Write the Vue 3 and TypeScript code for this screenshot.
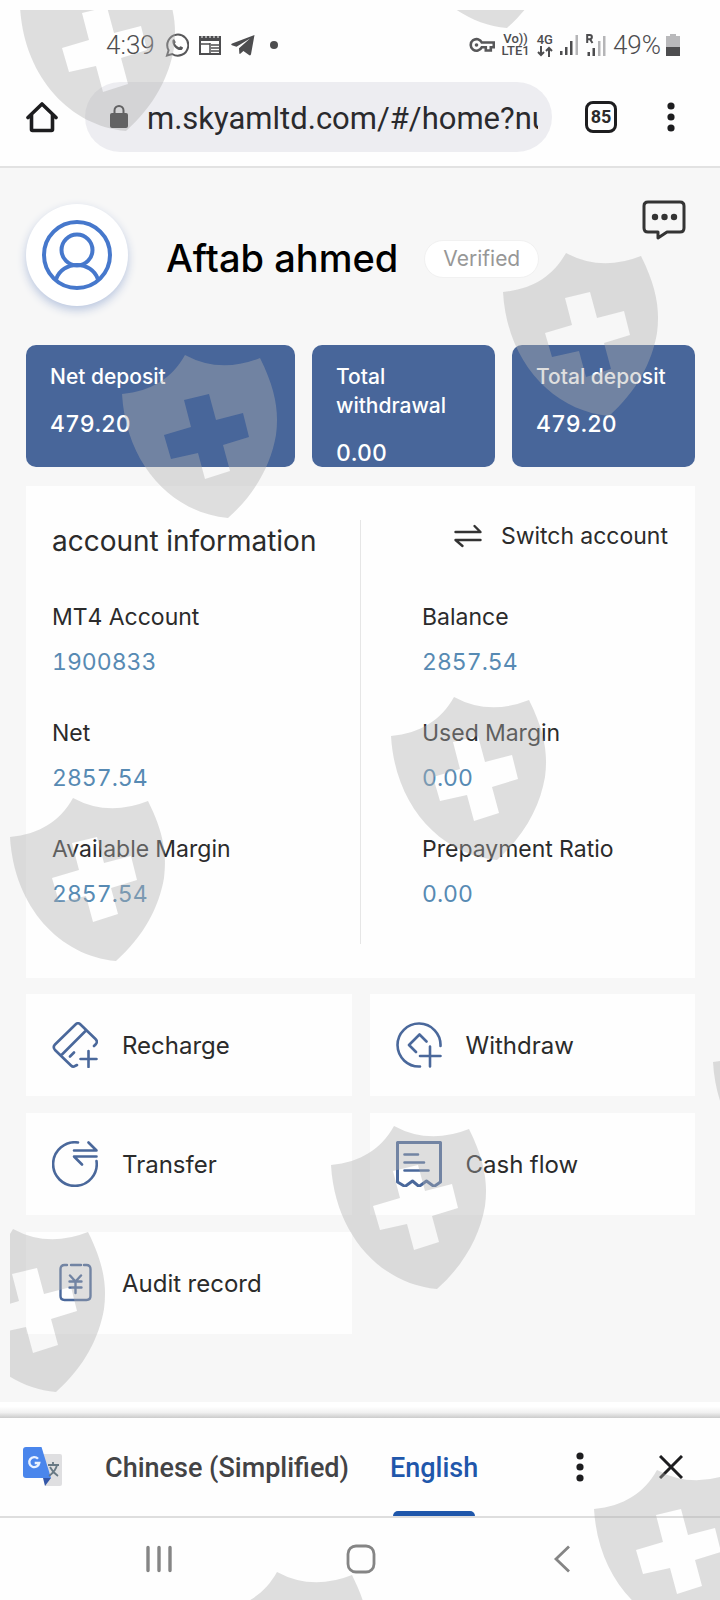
<script setup lang="ts">
import { ref } from 'vue'

interface Item { label: string; value: string }

const address = ref('m.skyamltd.com/#/home?nu')
const language = ref('English')

const totals: Item[] = [
  { label: 'Net deposit', value: '479.20' },
  { label: 'Total withdrawal', value: '0.00' },
  { label: 'Total deposit', value: '479.20' },
]
const leftDetails: Item[] = [
  { label: 'MT4 Account', value: '1900833' },
  { label: 'Net', value: '2857.54' },
  { label: 'Available Margin', value: '2857.54' },
]
const rightDetails: Item[] = [
  { label: 'Balance', value: '2857.54' },
  { label: 'Used Margin', value: '0.00' },
  { label: 'Prepayment Ratio', value: '0.00' },
]
const actions = [
  { id: 'recharge', label: 'Recharge' },
  { id: 'withdraw', label: 'Withdraw' },
  { id: 'transfer', label: 'Transfer' },
  { id: 'cash', label: 'Cash flow' },
  { id: 'audit', label: 'Audit record' },
]

// Left corner of every shield, relative to the watermark layer
const shields: [number, number][] = [
  [10, -3], [391, -106], [493, 282], [112, 384], [381, 726], [0, 827],
  [321, 1155], [-60, 1258], [703, 1052], [584, 1499], [204, 1601],
]
</script>

<template>
  <div class="phone">
    <header class="status">
      <div class="status-side">
        <span class="clock">4:39</span>
        <svg width="24" height="26" viewBox="0 0 24 26" fill="none" stroke="#58585a" stroke-width="2">
          <path d="M2 23.500l1.600-5.300A10.500 10.500 0 1 1 7.200 22z" />
          <path d="M7.500 8.200c.5-1.200 1.800-1.200 2.200-.3l.9 2c.2.600-.8 1.300-.7 1.700 1 2 2.300 3 4 3.700.6.100 1.200-1.300 1.800-1l2 1c.8.500-.1 2.200-1.100 2.600-4 1.400-10.200-4.500-9.100-9.700z" fill="#58585a" stroke="none" />
        </svg>
        <svg width="22" height="20" viewBox="0 0 22 20" fill="none" stroke="#4d4d4f" stroke-width="2">
          <path d="M1 3v16h20V3z" />
          <path d="M0 3.500h22" stroke-width="5" />
          <path d="M3 0v3M7 0v3M11 0v3M15 0v3M19 0v3" stroke="#fff" stroke-width="1" />
          <path d="M1 9h10M11 8v10M12 10h9M12 13h9M12 16h9" stroke-width="1.500" />
        </svg>
        <svg width="24" height="22" viewBox="0 0 24 22" fill="#4d4d4f">
          <path d="M23.500 1L20 20.300c-.3 1.200-1 1.400-2 .8l-5.600-4.200-2.800 2.700c-.7.600-1.200.4-1.300-.5L8 14.300 19 4.500 5.500 12.700.9 11.200c-1-.4-1-1 .2-1.600z" />
        </svg>
        <span class="dot"></span>
      </div>
      <div class="status-side right">
        <svg width="26" height="16" viewBox="0 0 26 16" fill="none" stroke="#58585a" stroke-width="2.600">
          <path d="M12.800 5.500a5.800 5.800 0 1 0 0 4.800h4v3.200h5v-3.200h3v-4.800z" />
          <circle cx="7.500" cy="8" r="1.800" fill="#58585a" stroke="none" />
        </svg>
        <span class="net">Vo))<br>LTE1</span>
        <span class="net band">4G
          <svg width="16" height="11" viewBox="0 0 16 11" fill="none" stroke="#4d4d4f" stroke-width="2">
            <path d="M4 0v9M1 6l3 3 3-3M12 11V2M9 5l3-3 3 3" />
          </svg>
        </span>
        <svg width="19" height="20" viewBox="0 0 19 20">
          <path d="M0 16h2.500v4H0zM5 12h2.500v8H5zM10 6h2.500v14H10z" fill="#4d4d4f" />
          <path d="M15.500 0H18v20h-2.500z" fill="#b5b5b7" />
        </svg>
        <svg width="20" height="22" viewBox="0 0 20 22">
          <path d="M1.500 18H4v4H1.500zM6.500 14H9v8H6.500z" fill="#4d4d4f" />
          <path d="M12 7h2.500v15H12zM17 2h2.500v20H17z" fill="#b5b5b7" />
          <path d="M1.200 9V1h2.600a2 2 0 0 1 0 4.200H1.500M4 5.200L6.500 9" fill="none" stroke="#4d4d4f" stroke-width="2" />
        </svg>
        <span class="clock">49%</span>
        <svg width="14" height="22" viewBox="0 0 14 22">
          <path d="M4 0h6v2h4v11H0V2h4z" fill="#b9b9bb" /><path d="M0 13h14v9H0z" fill="#4d4d4f" />
        </svg>
      </div>
    </header>

    <div class="browser">
      <button class="plain" aria-label="Home page">
        <svg width="32" height="32" viewBox="0 0 32 32" fill="none" stroke="#1d1d1f" stroke-width="3.600" stroke-linejoin="round" stroke-linecap="round">
          <path d="M2 16.500L16 3l14 13.500M5.500 14v14.500q0 1 1 1h19q1 0 1-1V14" />
        </svg>
      </button>
      <label class="address">
        <svg width="18" height="24" viewBox="0 0 18 24" fill="#2f2f31">
          <rect y="8" width="18" height="15" rx="2" />
          <path d="M4.500 9V5.500a4.500 4.500 0 0 1 9 0V9" fill="none" stroke="#2f2f31" stroke-width="2" />
        </svg>
        <input v-model="address" type="text" aria-label="Address">
      </label>
      <button class="tabs" aria-label="Open tabs">85</button>
      <button class="plain" aria-label="Browser menu">
        <svg width="8" height="30" viewBox="0 0 8 30" fill="#1d1d1f"><circle cx="4" cy="4" r="3.600" /><circle cx="4" cy="15" r="3.600" /><circle cx="4" cy="26" r="3.600" /></svg>
      </button>
    </div>

    <main>
      <section class="profile">
        <div class="avatar">
          <svg width="72" height="72" viewBox="0 0 72 72" fill="none" stroke="#4678cc" stroke-width="4">
            <circle cx="36" cy="36" r="33" /><circle cx="36" cy="31" r="15.500" />
            <path d="M15 60.500C18 51 27 46 36 46s18 5 21 14.500" />
          </svg>
        </div>
        <h1>Aftab ahmed</h1>
        <span class="verified">Verified</span>
        <button class="plain message" aria-label="Messages">
          <svg width="44" height="40" viewBox="0 0 44 40" fill="none" stroke="#343434" stroke-width="3" stroke-linejoin="round">
            <path d="M6 2h32q4 0 4 4v22q0 4-4 4H25l-9 6v-6H6q-4 0-4-4V6q0-4 4-4z" />
            <g fill="#343434" stroke="none"><circle cx="13" cy="17" r="3.200" /><circle cx="22.500" cy="17" r="3.200" /><circle cx="32" cy="17" r="3.200" /></g>
          </svg>
        </button>
      </section>

      <section class="totals">
        <div v-for="t in totals" :key="t.label" class="total">
          <div class="total-label">{{ t.label }}</div>
          <div class="total-value">{{ t.value }}</div>
        </div>
      </section>

      <section class="account">
        <div class="column">
          <h2>account information</h2>
          <dl>
            <div v-for="d in leftDetails" :key="d.label"><dt>{{ d.label }}</dt><dd>{{ d.value }}</dd></div>
          </dl>
        </div>
        <div class="column second">
          <button class="switch">
            <svg width="28" height="24" viewBox="0 0 28 24" fill="none" stroke="#333" stroke-width="2.400" stroke-linecap="round" stroke-linejoin="round">
              <path d="M1.500 8h25l-6-6M26.500 16h-25l7 6" />
            </svg>
            Switch account
          </button>
          <dl>
            <div v-for="d in rightDetails" :key="d.label"><dt>{{ d.label }}</dt><dd>{{ d.value }}</dd></div>
          </dl>
        </div>
      </section>

      <nav class="actions">
        <button v-for="a in actions" :key="a.id" class="action">
          <svg width="46" height="46" viewBox="0 0 46 46" fill="none" stroke="#4a689b" stroke-width="2.600" stroke-linecap="round" stroke-linejoin="round">
            <template v-if="a.id === 'recharge'">
              <path d="M25 43l-2 1q-2 1.500-4-.5L3 28q-2.500-3 0-5.500L23.500 2.500q2.500-2.500 5 0L43.500 17q2.500 2.500.5 5l-2 2M9 33.500L33.500 9M18 34.500l4-4M36.500 29v16M28.500 37h16" />
            </template>
            <template v-else-if="a.id === 'withdraw'">
              <path d="M44.500 24A21.500 21.500 0 1 0 24 44.500M20 30l-7-7L23.500 12.500l7 7M34 24.500v20M24 34h20.500" />
            </template>
            <template v-else-if="a.id === 'transfer'">
              <path d="M26 1.500A21.800 21.800 0 1 0 44.500 20M22 9.500h22.500l-8-8M44.500 15.500H22l8 8" />
            </template>
            <template v-else-if="a.id === 'cash'">
              <path d="M1.500 1.500h43V41L38 45.500 30.500 40 23 45.500 16.500 40 9 45.500 1.500 41z" stroke-width="3" />
              <path d="M8.500 13.500H22M8.500 21.500h19.500M8.500 29.500h24" />
            </template>
            <template v-else>
              <path d="M15 5h-2.500Q8.500 5 8.500 9v27q0 4 4 4h22q4 0 4-4V9q0-4-4-4H32M19 5h10M18 15.500l5.500 6 5.500-6M17.500 21.500h12M17.500 27.500h12M23.500 21.500V33" stroke-width="2.400" />
            </template>
          </svg>
          {{ a.label }}
        </button>
      </nav>
    </main>

    <div class="edge"></div>
    <section class="translate">
      <svg class="logo" width="40" height="40" viewBox="0 0 40 40">
        <path d="M20 7h17q2 0 2 2v28q0 2-2 2H22z" fill="#dfdfe1" />
        <path d="M20 31h8l-6 8z" fill="#3457a8" />
        <path d="M3 0h15.500L28 31H3q-3 0-3-3V3q0-3 3-3z" fill="#4a86ec" />
        <path d="M15 11.800a5 5 0 1 0 1.200 4.200h-4.500" fill="none" stroke="#e9f2ff" stroke-width="2.400" />
        <path d="M25 18h11M30 15v3M34 18c-1 5-4 8-8 11M27 20c2 4 5 7 8 9" fill="none" stroke="#687984" stroke-width="1.800" />
      </svg>
      <button class="lang" :class="{ active: language === 'Chinese' }" @click="language = 'Chinese'">Chinese (Simplified)</button>
      <button class="lang" :class="{ active: language === 'English' }" @click="language = 'English'">English</button>
      <div class="translate-tools">
        <button class="plain" aria-label="Translation options">
          <svg width="8" height="30" viewBox="0 0 8 30" fill="#1d1d1f"><circle cx="4" cy="4" r="3.600" /><circle cx="4" cy="15" r="3.600" /><circle cx="4" cy="26" r="3.600" /></svg>
        </button>
        <button class="plain" aria-label="Close">
          <svg width="24" height="24" viewBox="0 0 24 24" fill="none" stroke="#1d1d1f" stroke-width="3"><path d="M1 1l22 22M23 1L1 23" /></svg>
        </button>
      </div>
    </section>

    <nav class="system">
      <button class="plain" aria-label="Recent apps">
        <svg width="28" height="28" viewBox="0 0 28 28" stroke="#858585" stroke-width="3.400" stroke-linecap="round"><path d="M3 2.500v23M14 2.500v23M25 2.500v23" /></svg>
      </button>
      <button class="plain" aria-label="Home">
        <svg width="30" height="30" viewBox="0 0 30 30" fill="none" stroke="#858585" stroke-width="2.800"><rect x="2" y="2" width="26" height="26" rx="8" /></svg>
      </button>
      <button class="plain" aria-label="Back">
        <svg width="28" height="28" viewBox="0 0 28 28" fill="none" stroke="#858585" stroke-width="2.800"><path d="M21 1.500L8 14l13 12.500" /></svg>
      </button>
    </nav>

    <svg class="watermark" aria-hidden="true">
      <path
        v-for="([x, y], i) in shields"
        :key="i"
        :transform="`translate(${x} ${y})`"
        fill-rule="evenodd"
        d="M0 0C30-3 50-16 63-39Q98-20 138-36C154-4 157 18 154 41C149 70 134 99 106 124C50 119 4 70 0 0ZM62 6L87 0L94 26L121 19L127 43L101 51L108 77L83 85L76 59L49 65L42 41L69 33Z"
      />
    </svg>
  </div>
</template>

<style>
body { margin: 0; }
</style>

<style scoped>
* { box-sizing: border-box; }
.phone { position: relative; display: flex; flex-direction: column; min-height: 100vh; overflow: hidden; background: #fefefe; color: #2b2b2b; font-family: Inter, "Liberation Sans", sans-serif; font-variant-numeric: tabular-nums; }
button { border: 0; padding: 0; background: none; color: inherit; font: inherit; cursor: pointer; }
svg { display: block; flex: none; }
.plain { display: flex; }

.status { display: flex; justify-content: space-between; padding: 29px 40px 22px 106px; font-family: Roboto, sans-serif; color: #4d4d4f; }
.status-side { display: flex; align-items: center; gap: 10px; height: 32px; }
.status-side.right { gap: 7px; }
.clock { font-size: 26px; line-height: 32px; font-weight: 300; }
.right .clock { margin-right: -2px; }
.dot { width: 8px; height: 8px; margin-left: 5px; border-radius: 50%; background: #4d4d4f; }
.net { font-size: 13px; line-height: 12px; font-weight: 500; text-align: center; }
.band { display: flex; flex-direction: column; align-items: center; }

.browser { display: flex; align-items: center; height: 85px; padding: 0 45px 15px 26px; border-bottom: 2px solid #e2e2e2; font-family: Roboto, sans-serif; }
.address { display: flex; flex: 1; align-items: center; gap: 19px; min-width: 0; height: 70px; margin: 0 33px 0 27px; padding: 0 14px 0 25px; border-radius: 35px; background: #ededf1; }
.address input { flex: 1; min-width: 0; height: 46px; border: 0; padding: 2px 0 0; outline: 0; background: none; color: #2a2a2d; font: 31px/44px Roboto, sans-serif; }
.tabs { width: 32px; height: 32px; margin-right: 50px; border: 3px solid #1d1d1f; border-radius: 8px; font-size: 18px; line-height: 26px; font-weight: 700; }

main { flex: 1; padding: 36px 25px 66px 26px; background: #f7f7f7; }
.profile { display: flex; align-items: center; height: 102px; margin-bottom: 39px; }
.avatar { display: flex; align-items: center; justify-content: center; width: 102px; height: 102px; border-radius: 50%; background: #fff; box-shadow: 0 4px 10px #b9c6df; }
h1 { margin: 6px 26px 0 38px; font-size: 38px; line-height: 48px; font-weight: 500; color: #000; }
.verified { margin-top: 8px; padding: 0 18px; border: 1px solid #f1f1f1; border-radius: 19px; background: #fff; color: #979797; font-size: 21px; line-height: 36px; }
.message { align-self: flex-start; margin: -4px 9px 0 auto; }

.totals { display: grid; grid-template-columns: 269fr 183fr 183fr; gap: 17px; margin-bottom: 19px; }
.total { padding: 17px 24px 0; border-radius: 10px; background: #48669a; color: #fff; font-weight: 500; line-height: 29px; }
.total-label { margin-bottom: 19px; font-size: 21px; }
.total-value { font-size: 23px; line-height: 28px; }

.account { display: grid; grid-template-columns: 1fr 1fr; margin-bottom: 16px; padding: 34px 27px 34px 26px; background: #fefefe; }
.column { min-height: 424px; }
.second { padding-left: 61px; border-left: 1px solid #e6e6e6; }
h2 { height: 82px; margin: 0; font-size: 28px; line-height: 42px; font-weight: 400; }
.switch { display: flex; align-items: center; justify-content: flex-end; gap: 19px; width: 100%; height: 32px; margin-bottom: 50px; font-size: 23px; white-space: nowrap; }
dl { display: grid; gap: 41px; margin: 0; line-height: 30px; }
dt { margin-bottom: 15px; font-size: 23px; }
dd { margin: 0; color: #578ab3; font-size: 23px; }

.actions { display: grid; grid-template-columns: 1fr 1fr; gap: 17px 18px; }
.action { display: flex; align-items: center; gap: 24px; height: 102px; padding-left: 26px; background: #fefefe; font-size: 24px; }

.edge { height: 16px; background: linear-gradient(#fff 30%, #f1f1f1 65%, #cbcbcb); }
.translate { display: flex; align-items: center; height: 100px; padding: 0 37px 0 23px; border-bottom: 2px solid #dedede; font-family: Roboto, sans-serif; font-size: 27px; font-weight: 500; }
.logo { margin-right: 42px; }
.lang { position: relative; height: 98px; margin-right: 41px; padding-top: 2px; color: #434345; white-space: nowrap; }
.lang.active { color: #1f57ab; }
.lang.active::after { content: ""; position: absolute; right: 3px; bottom: 0; left: 3px; height: 5px; border-radius: 5px 5px 0 0; background: #1f57ab; }
.translate-tools { display: flex; flex: 1; align-items: center; justify-content: flex-end; gap: 75px; }
.system { display: flex; align-items: center; justify-content: space-between; height: 82px; padding: 0 144px 0 145px; }
.watermark { position: absolute; top: 10px; left: 10px; width: calc(100% - 10px); height: calc(100% - 10px); overflow: hidden; fill: #afafaf; fill-opacity: .4; pointer-events: none; }
</style>
